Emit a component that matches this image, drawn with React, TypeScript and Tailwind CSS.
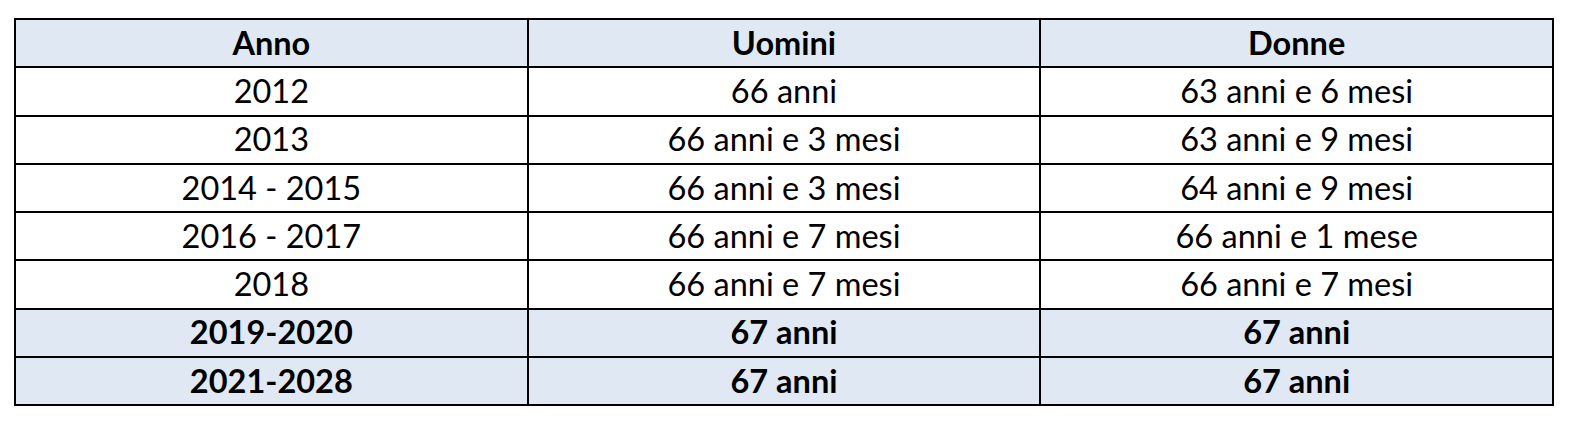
import React from 'react';

const rows = [
  { anno: '2012', uomini: '66 anni', donne: '63 anni e 6 mesi' },
  { anno: '2013', uomini: '66 anni e 3 mesi', donne: '63 anni e 9 mesi' },
  { anno: '2014 - 2015', uomini: '66 anni e 3 mesi', donne: '64 anni e 9 mesi' },
  { anno: '2016 - 2017', uomini: '66 anni e 7 mesi', donne: '66 anni e 1 mese' },
  { anno: '2018', uomini: '66 anni e 7 mesi', donne: '66 anni e 7 mesi' },
  { anno: '2019-2020', uomini: '67 anni', donne: '67 anni', bold: true },
  { anno: '2021-2028', uomini: '67 anni', donne: '67 anni', bold: true },
];

const cell = 'border-[2.5px] border-black p-0 text-center align-middle';

const App = () => {
  return (
    <div className="w-[1584px] h-[434px] bg-white pt-[18px] pl-[14px] font-['Lato','Liberation_Sans',sans-serif] text-black">
      <table className="w-[1540px] border-collapse table-fixed text-[32.5px] leading-none">
        <thead>
          <tr className="h-[48.25px] bg-[#dfe8f3] font-bold">
            <th className={cell}>Anno</th>
            <th className={cell}>Uomini</th>
            <th className={cell}>Donne</th>
          </tr>
        </thead>
        <tbody>
          {rows.map((r) => (
            <tr key={r.anno} className={r.bold ? 'h-[48.25px] bg-[#dfe8f3] font-bold' : 'h-[48.25px] bg-white'}>
              <td className={cell}>{r.anno}</td>
              <td className={cell}>{r.uomini}</td>
              <td className={cell}>{r.donne}</td>
            </tr>
          ))}
        </tbody>
      </table>
    </div>
  );
};

export default App;
